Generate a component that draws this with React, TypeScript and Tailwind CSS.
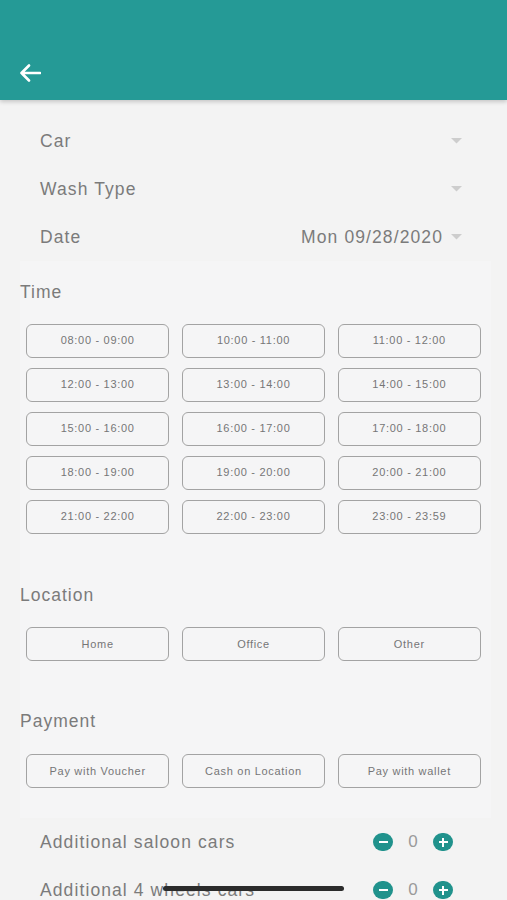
import React from 'react';

const times = [
  '08:00 - 09:00', '10:00 - 11:00', '11:00 - 12:00',
  '12:00 - 13:00', '13:00 - 14:00', '14:00 - 15:00',
  '15:00 - 16:00', '16:00 - 17:00', '17:00 - 18:00',
  '18:00 - 19:00', '19:00 - 20:00', '20:00 - 21:00',
  '21:00 - 22:00', '22:00 - 23:00', '23:00 - 23:59',
];

function Caret() {
  return (
    <svg width="11" height="6" viewBox="0 0 11 6" className="shrink-0">
      <path d="M0 0 L11 0 L5.5 5.5 Z" fill="#cdcdcd" />
    </svg>
  );
}

function SelectRow({ label, value }: { label: string; value?: string }) {
  return (
    <div className="h-[48px] flex items-center pl-[40px] pr-[45px]">
      <span className="flex-1 text-[17.5px] tracking-[1.1px] text-[#7b7b7b]">{label}</span>
      {value && <span className="text-[17.5px] tracking-[1.1px] text-[#7b7b7b] mr-[8px]">{value}</span>}
      <Caret />
    </div>
  );
}

function Heading({ children }: { children: React.ReactNode }) {
  return (
    <div className="h-[24px] flex items-center text-[17.5px] tracking-[1px] text-[#7b7b7b]">{children}</div>
  );
}

function Chip({ children }: { children: React.ReactNode }) {
  return (
    <div className="h-[34px] flex items-center justify-center rounded-[6px] border-[1.5px] border-[#a3a3a3] text-[11px] tracking-[0.7px] text-[#767676]">
      {children}
    </div>
  );
}

function Stepper({ label }: { label: string }) {
  return (
    <div className="h-[48px] flex items-center pl-[40px] pr-[54px]">
      <span className="flex-1 text-[17.5px] tracking-[1.1px] text-[#7b7b7b]">{label}</span>
      <div className="w-[20px] h-[18px] rounded-full bg-[#20928c] flex items-center justify-center">
        <div className="w-[9px] h-[2px] bg-white" />
      </div>
      <span className="w-[40px] text-center text-[17px] text-[#9a9a9a]">0</span>
      <div className="w-[20px] h-[18px] rounded-full bg-[#20928c] flex items-center justify-center relative">
        <div className="w-[9px] h-[2px] bg-white" />
        <div className="absolute w-[2px] h-[9px] bg-white" />
      </div>
    </div>
  );
}

export default function App() {
  return (
    <div
      className="relative w-[507px] h-[900px] overflow-hidden bg-[#f3f3f3]"
      style={{ fontFamily: '"Liberation Sans", Arial, sans-serif' }}
    >
      <div className="h-[100px] bg-[#259a96] shadow-[0_2px_4px_rgba(0,0,0,0.18)] relative z-10 flex items-end pb-[18px] pl-[19px]">
        <svg width="22" height="18" viewBox="0 0 22 18">
          <path d="M21 9 H2.5 M10 1.5 L2.5 9 L10 16.5" fill="none" stroke="#ffffff" strokeWidth="2.6" strokeLinecap="round" strokeLinejoin="round" />
        </svg>
      </div>

      <div className="pt-[17px]">
        <SelectRow label="Car" />
        <SelectRow label="Wash Type" />
        <SelectRow label="Date" value="Mon 09/28/2020" />
      </div>

      <div className="mx-[20px] w-[471px] bg-[#f5f5f6] pt-[19px] pb-[30px]">
        <Heading>Time</Heading>
        <div className="mt-[19.5px] ml-[6px] mr-[10px] grid grid-cols-3 gap-x-[12.5px] gap-y-[10px]">
          {times.map((t) => (
            <Chip key={t}>{t}</Chip>
          ))}
        </div>

        <div className="mt-[49.5px]">
          <Heading>Location</Heading>
        </div>
        <div className="mt-[20px] ml-[6px] mr-[10px] grid grid-cols-3 gap-x-[12.5px]">
          <Chip>Home</Chip>
          <Chip>Office</Chip>
          <Chip>Other</Chip>
        </div>

        <div className="mt-[48px]">
          <Heading>Payment</Heading>
        </div>
        <div className="mt-[21px] ml-[6px] mr-[10px] grid grid-cols-3 gap-x-[12.5px]">
          <Chip>Pay with Voucher</Chip>
          <Chip>Cash on Location</Chip>
          <Chip>Pay with wallet</Chip>
        </div>
      </div>

      <Stepper label="Additional saloon cars" />
      <Stepper label="Additional 4 wheels cars" />

      <div className="absolute left-[163px] top-[886px] w-[181px] h-[5px] rounded-full bg-[#2b2b2b]" />
    </div>
  );
}
